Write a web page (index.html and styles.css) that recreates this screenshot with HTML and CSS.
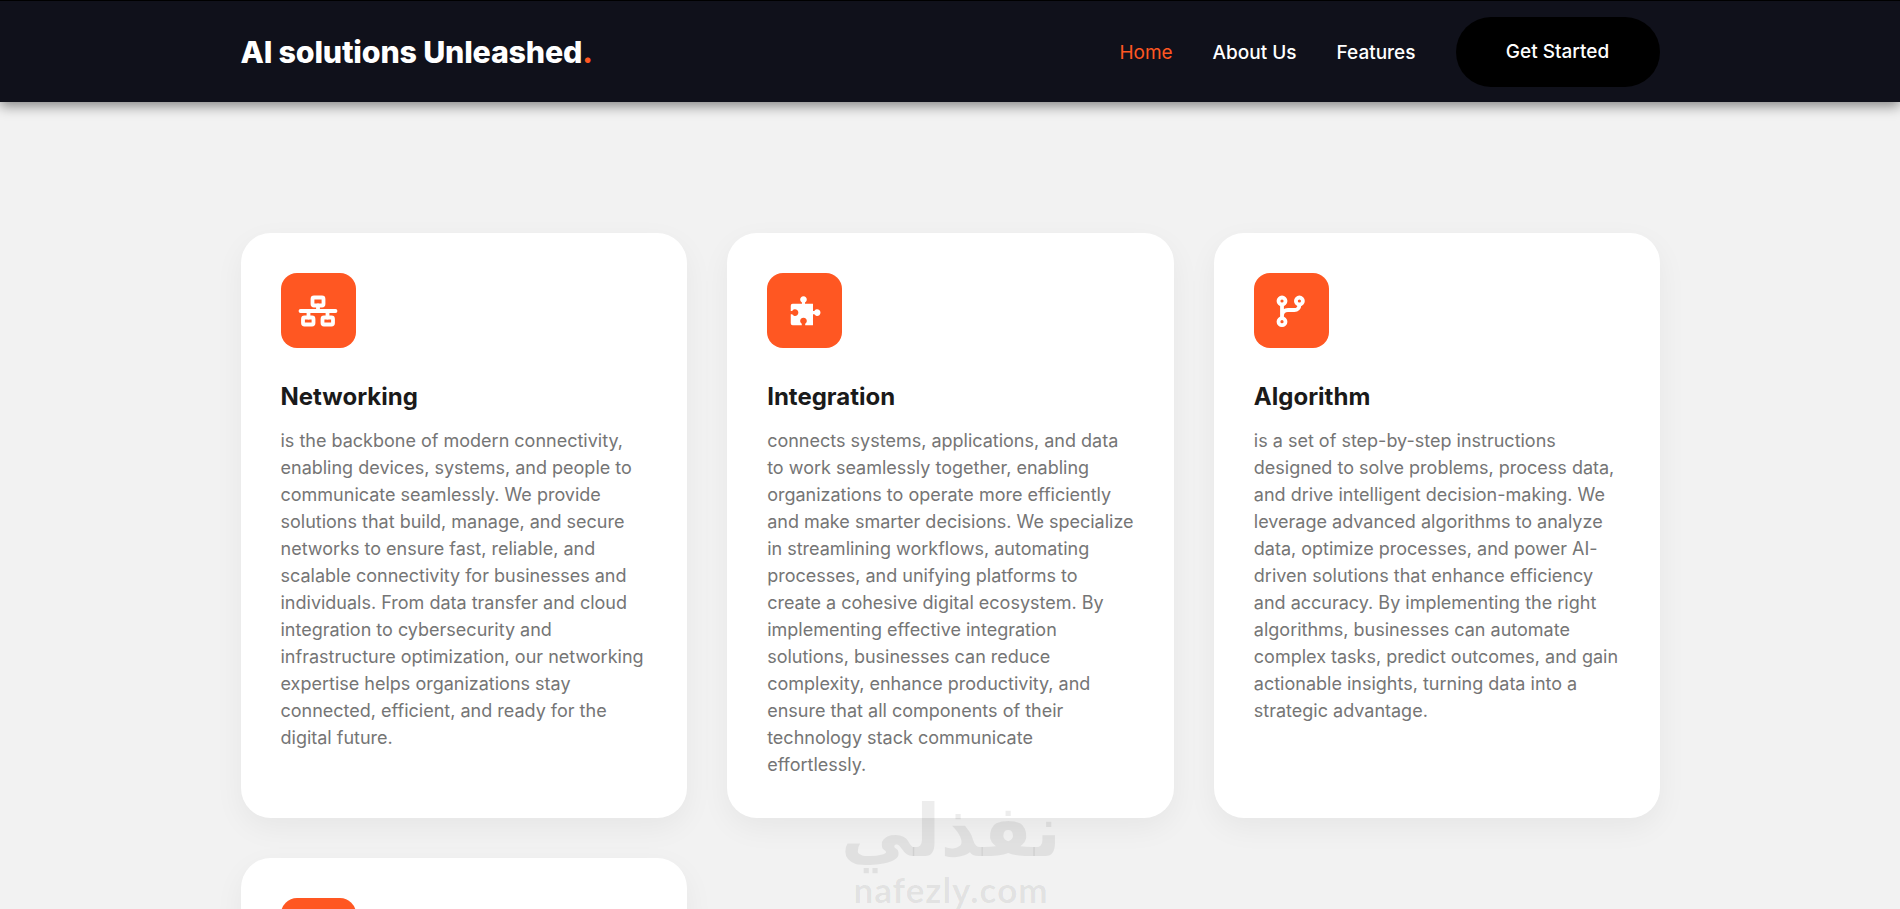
FILE: index.html
```html
<!DOCTYPE html>
<html lang="en">
<head>
    <meta charset="UTF-8">
    <meta name="viewport" content="width=device-width, initial-scale=1.0">
    <title>AI solutions Unleashed</title>
    <link rel="stylesheet" href="styles.css">
</head>
<body>
    <header class="header">
        <div class="header-inner">
            <a class="logo" href="#">AI solutions Unleashed<span class="logo-dot">.</span></a>
            <nav class="nav">
                <a class="nav-link active" href="#">Home</a>
                <a class="nav-link" href="#">About Us</a>
                <a class="nav-link" href="#">Features</a>
                <a class="btn" href="#">Get Started</a>
            </nav>
        </div>
    </header>

    <main class="cards">
        <div class="card">
            <div class="card-icon">
                <svg viewBox="0 0 40 40" width="40" height="40" fill="none" stroke="#fff" stroke-width="3.800" stroke-linejoin="round" stroke-linecap="round">
                    <rect x="14.500" y="6.500" width="11" height="8" rx="1.500"/>
                    <rect x="5" y="26.500" width="10.500" height="7" rx="1.500"/>
                    <rect x="24.500" y="26.500" width="10.500" height="7" rx="1.500"/>
                    <path d="M20 14.500V20M2.500 20h35M10.500 20v6.500M29.500 20v6.500"/>
                </svg>
            </div>
            <h3 class="card-title">Networking</h3>
            <p class="card-text">is the backbone of modern connectivity, enabling devices, systems, and people to communicate seamlessly. We provide solutions that build, manage, and secure networks to ensure fast, reliable, and scalable connectivity for businesses and individuals. From data transfer and cloud integration to cybersecurity and infrastructure optimization, our networking expertise helps organizations stay connected, efficient, and ready for the digital future.</p>
        </div>
        <div class="card">
            <div class="card-icon">
                <svg viewBox="0 0 40 40" width="38" height="38" fill="#fff">
                    <path d="M7 12.400H16.800V11A3.500 3.500 0 1 1 20 11V12.400H28.400V19.900H29.800A3.500 3.500 0 1 1 29.800 23.500H28.400V35H20.200V33.500A3.500 3.500 0 1 0 16.600 33.500V35H7A2 2 0 0 1 5 33V23.500H6.500A3.500 3.500 0 1 0 6.500 19.900H5V14.400A2 2 0 0 1 7 12.400Z"/>
                </svg>
            </div>
            <h3 class="card-title">Integration</h3>
            <p class="card-text">connects systems, applications, and data to work seamlessly together, enabling organizations to operate more efficiently and make smarter decisions. We specialize in streamlining workflows, automating processes, and unifying platforms to create a cohesive digital ecosystem. By implementing effective integration solutions, businesses can reduce complexity, enhance productivity, and ensure that all components of their technology stack communicate effortlessly.</p>
        </div>
        <div class="card">
            <div class="card-icon">
                <svg viewBox="0 0 40 40" width="40" height="40" fill="none" stroke="#fff" stroke-width="3.800">
                    <circle cx="11" cy="10" r="3.500"/>
                    <circle cx="28.400" cy="10" r="3.500"/>
                    <circle cx="11" cy="30.700" r="3.500"/>
                    <path d="M11 13.500V27.200M28.400 13.500V14c0 3-2 5-5 5H17c-3.500 0-6 2.500-6 6"/>
                </svg>
            </div>
            <h3 class="card-title">Algorithm</h3>
            <p class="card-text">is a set of step-by-step instructions designed to solve problems, process data, and drive intelligent decision-making. We leverage advanced algorithms to analyze data, optimize processes, and power AI-driven solutions that enhance efficiency and accuracy. By implementing the right algorithms, businesses can automate complex tasks, predict outcomes, and gain actionable insights, turning data into a strategic advantage.</p>
        </div>
        <div class="card">
            <div class="card-icon"></div>
        </div>
    </main>

    <div class="watermark">
        <div class="watermark-ar" lang="ar" dir="rtl">نفذلي</div>
        <div class="watermark-en">nafezly.com</div>
    </div>
</body>
</html>
```

FILE: styles.css
```css
* {
    box-sizing: border-box;
}

html, body {
    height: 909px;
    overflow: hidden;
}

body {
    margin: 0;
    background-color: #f2f2f2;
    font-family: Inter, Arial, sans-serif;
    color: #1a1a1a;
}

a {
    text-decoration: none;
}

.header {
    height: 102px;
    background-color: #10111b;
    border-top: 1px solid #000;
    box-shadow: 0 4px 12px rgba(0, 0, 0, 0.45);
}

.header-inner {
    width: 1419px;
    height: 100%;
    margin-left: 240.500px;
    display: flex;
    justify-content: space-between;
    align-items: center;
}

.logo {
    color: #ffffff;
    font-size: 30.400px;
    font-weight: 800;
    letter-spacing: -0.2px;
}

.logo-dot {
    color: #ff5722;
}

.nav {
    display: flex;
    align-items: center;
    gap: 40px;
}

.nav-link {
    padding-top: 2px;
    color: #ffffff;
    font-size: 19px;
    font-weight: 500;
}

.nav-link.active {
    color: #ff5722;
    font-weight: 400;
}

.btn {
    width: 204px;
    height: 70px;
    display: flex;
    align-items: center;
    justify-content: center;
    background-color: #000000;
    color: #ffffff;
    border-radius: 35px;
    font-size: 19px;
    font-weight: 500;
}

.cards {
    width: 1420px;
    margin: 131px 0 0 240.500px;
    display: grid;
    grid-template-columns: repeat(3, 1fr);
    gap: 40px;
}

.card {
    background-color: #ffffff;
    border-radius: 30px;
    padding: 40px;
    height: 585px;
    box-shadow: 0 10px 30px rgba(0, 0, 0, 0.05);
}

.card-icon {
    width: 75px;
    height: 75px;
    margin-bottom: 34px;
    background-color: #ff5722;
    border-radius: 16px;
    display: flex;
    align-items: center;
    justify-content: center;
}

.card-title {
    margin: 0 0 16px;
    font-size: 24px;
    font-weight: 700;
    line-height: 29px;
}

.card-text {
    margin: 0;
    color: #757575;
    font-size: 18px;
    line-height: 27px;
}

.watermark {
    position: absolute;
    left: 841px;
    top: 787px;
    width: 220px;
    text-align: center;
    color: rgba(0, 0, 0, 0.07);
    pointer-events: none;
}

.watermark-ar {
    font-family: "Noto Sans", "DejaVu Sans", sans-serif;
    font-size: 72px;
    font-weight: 700;
    line-height: 82px;
}

.watermark-en {
    font-family: Lato, sans-serif;
    font-size: 35px;
    font-weight: 700;
    line-height: 40px;
    letter-spacing: 1px;
}
```
